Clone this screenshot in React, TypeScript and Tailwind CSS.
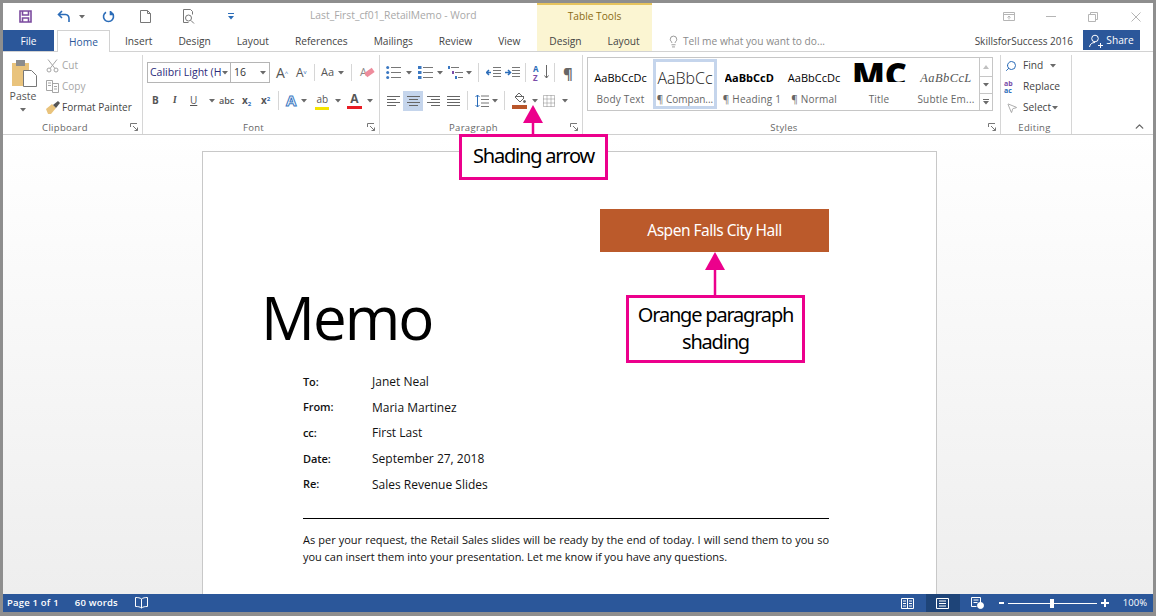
import React from "react";
import { ChevronUp, Lightbulb, Search, MousePointer2 } from "lucide-react";

const Caret = ({ className = "" }: { className?: string }) => (
  <svg width="6" height="4" viewBox="0 0 6 4" className={`shrink-0 ${className}`}>
    <path d="M0 0h6L3 3.5z" fill="#6a6a6a" />
  </svg>
);

const Launcher = () => (
  <svg width="8" height="8" viewBox="0 0 8 8" className="absolute right-[4px] bottom-[3px]" fill="none" stroke="#777">
    <path d="M.5 4V.5H7M7.5 7.5L3 3M7.5 4.5v3h-3" />
  </svg>
);

const Group = ({ label, width, children }: { label: string; width: string; children: React.ReactNode }) => (
  <div className={`relative flex flex-col shrink-0 h-[79px] border-r border-[#d6d6d6] ${width}`}>
    <div className="flex-1 min-h-0">{children}</div>
    <div className={`text-center text-[9.5px] leading-[12px] tracking-[0.3px] text-[#666] ${label === "Editing" ? "pr-[6px]" : "pr-[15px]"}`}>{label}</div>
    {label !== "Editing" && <Launcher />}
  </div>
);

const Lines = ({ kind }: { kind: "left" | "center" | "right" | "justify" }) => {
  const rows = {
    left: ["M0 .5h13", "M0 3.5h9", "M0 6.5h13", "M0 9.5h9"],
    center: ["M0 .5h13", "M2 3.5h9", "M0 6.5h13", "M2 9.5h9"],
    right: ["M0 .5h13", "M4 3.5h9", "M0 6.5h13", "M4 9.5h9"],
    justify: ["M0 .5h13", "M0 3.5h13", "M0 6.5h13", "M0 9.5h13"],
  }[kind];
  return (
    <svg width="13" height="10" viewBox="0 0 13 10" stroke="#666">
      {rows.map((d) => (
        <path key={d} d={d} />
      ))}
    </svg>
  );
};

const ListIcon = ({ kind }: { kind: "bullet" | "number" | "multi" }) => (
  <svg width="15" height="14" viewBox="0 0 15 14">
    {kind === "multi" ? (
      <g>
        <path d="M3 1.5h8M7 6.5h8M10 11.5h5" stroke="#777" />
        <rect x="0" y="0" width="2" height="3" fill="#3a78c2" />
        <rect x="4" y="5" width="2" height="3" fill="#7a4ca8" />
        <rect x="7" y="10" width="2" height="3" fill="#3a78c2" />
      </g>
    ) : (
      <g>
        <path d="M5 1.5h10M5 6.5h10M5 11.5h10" stroke="#777" />
        {[1.5, 6.5, 11.5].map((y) =>
          kind === "bullet" ? (
            <circle key={y} cx="1.7" cy={y} r="1.5" fill="#3a78c2" />
          ) : (
            <rect key={y} x="0" y={y - 1.5} width="3.5" height="3" fill="#3a78c2" />
          )
        )}
      </g>
    )}
  </svg>
);

const StyleItem = ({ sample, label, width, sampleClass }: { sample: React.ReactNode; label: string; width: string; sampleClass: string }) => (
  <div className={`flex flex-col items-center shrink-0 overflow-hidden h-full ${width}`}>
    <div className={`h-[35px] pt-[5px] w-full flex items-center justify-center overflow-hidden whitespace-nowrap ${sampleClass}`}>{sample}</div>
    <div className="text-[10px] leading-[12px] text-[#666] whitespace-nowrap tracking-[0.2px]">{label}</div>
  </div>
);

const Callout = ({ className, children }: { className: string; children: React.ReactNode }) => (
  <div className={`absolute z-10 bg-white border-[3px] border-[#ec008c] pb-[3px] flex items-center justify-center text-center text-black font-['Noto_Sans',sans-serif] text-[20px] leading-[27px] tracking-[-1.2px] ${className}`}>
    {children}
  </div>
);

const MemoRow = ({ label, value }: { label: string; value: string }) => (
  <div className="flex h-[25.7px] items-center text-[12px] text-[#111]">
    <span className="w-[69px] font-semibold text-[11px] tracking-[-0.1px]">{label}</span>
    <span>{value}</span>
  </div>
);

export default function App() {
  return (
    <div className="relative w-[1156px] h-[616px] overflow-hidden bg-white border-[3px] border-b-[4px] border-[#8e8e8e] flex flex-col font-['Open_Sans',sans-serif]">
      {/* title bar */}
      <div className="flex h-[27px] shrink-0">
        <div className="flex items-center w-[534px] shrink-0">
          <svg width="13" height="13" viewBox="0 0 13 13" className="ml-[16px]" fill="none" stroke="#7b4a9e" strokeWidth="1.6">
            <path d="M1 1h11v11H1zM3.5 1v4h6V1M3.5 12V8h6v4" />
          </svg>
          <svg width="14" height="13" viewBox="0 0 14 13" className="ml-[25px]" fill="none" stroke="#2b6cb8" strokeWidth="1.6">
            <path d="M5 1L1.5 4.5 5 8M2 4.5h6.5a4 4 0 0 1 3.5 4V12" />
          </svg>
          <Caret className="ml-[8px]" />
          <svg width="13" height="13" viewBox="0 0 13 13" className="ml-[17px]" fill="none" stroke="#2b6cb8" strokeWidth="1.6">
            <path d="M4 2.2a5 5 0 1 0 5 0M8.5 1v3.5H12" />
          </svg>
          <svg width="11" height="13" viewBox="0 0 11 13" className="ml-[25px]" fill="none" stroke="#777">
            <path d="M.5.5h7l3 3v9H.5zM7.5.5v3h3" />
          </svg>
          <svg width="14" height="15" viewBox="0 0 14 15" className="ml-[31px]" fill="none" stroke="#777">
            <path d="M1.5.5h7l2 2v3M1.5.5v13h5" />
            <circle cx="6.5" cy="9" r="3" />
            <path d="M9 11.5l3 3" />
          </svg>
          <svg width="6" height="7" viewBox="0 0 6 7" className="ml-[32px]">
            <path d="M0 .5h6" stroke="#2b6cb8" />
            <path d="M0 3h6L3 6.5z" fill="#2b6cb8" />
          </svg>
          <span className="ml-[76px] pb-[2px] text-[10.3px] text-[#a8a8a8] whitespace-nowrap">Last_First_cf01_RetailMemo - Word</span>
        </div>
        <div className="w-[115px] shrink-0 bg-[#fbf5d2] border-t-[2px] border-[#e6c35c] pb-[2px] flex items-center justify-center text-[10.2px] text-[#8a6a14]">
          Table Tools
        </div>
        <div className="flex-1 flex items-center">
          <svg width="12" height="9" viewBox="0 0 12 9" className="ml-[351px]" fill="none" stroke="#b5b5b5">
            <path d="M.5.5h11v8H.5zM.5 2.5h11M6 7.500V4M4.500 5.500L6 4l1.500 1.500" />
          </svg>
          <div className="ml-[31px] w-[10px] h-px bg-[#b5b5b5]" />
          <svg width="10" height="10" viewBox="0 0 10 10" className="ml-[32px]" fill="none" stroke="#b5b5b5">
            <path d="M.5 2.5h7v7h-7zM2.5 2.5v-2h7v7h-2" />
          </svg>
          <svg width="10" height="10" viewBox="0 0 10 10" className="ml-[33px]" stroke="#b5b5b5">
            <path d="M.5.5l9 9M9.5.5l-9 9" />
          </svg>
        </div>
      </div>

      {/* tabs */}
      <div className="flex h-[22px] shrink-0 border-b border-[#d2d2d2] text-[10.2px] text-[#444] items-stretch">
        <div className="w-[51px] pt-[2px] bg-[#2b579a] text-white flex items-center justify-center">File</div>
        <div className="ml-[3px] w-[53px] pt-[2px] -mb-px bg-white border border-b-0 border-[#d2d2d2] text-[#2b579a] flex items-center justify-center">Home</div>
        <div className="flex items-center pt-[2px] pl-[2px] w-[427px] shrink-0">
          {["Insert", "Design", "Layout", "References", "Mailings", "Review", "View"].map((t) => (
            <span key={t} className="px-[13px]">{t}</span>
          ))}
        </div>
        <div className="w-[115px] pt-[2px] shrink-0 bg-[#fbf5d2] flex items-center justify-center gap-[26px]">
          <span>Design</span>
          <span>Layout</span>
        </div>
        <div className="flex items-center pt-[2px] ml-[15px] text-[#8a8a8a]">
          <Lightbulb size={13} strokeWidth={1.2} color="#666" />
          <span className="ml-[3px] whitespace-nowrap">Tell me what you want to do...</span>
        </div>
        <span className="ml-auto self-center pt-[2px] text-[10px] text-[#444] whitespace-nowrap">SkillsforSuccess 2016</span>
        <div className="ml-[10px] mr-[13px] mb-px pt-[1px] w-[57px] bg-[#2b579a] text-white flex items-center justify-center gap-[3px]">
          <svg width="14" height="14" viewBox="0 0 14 14" fill="none" stroke="#fff">
            <circle cx="6" cy="4.5" r="3.3" />
            <path d="M.5 13c.5-3 2.500-4.500 5.500-4.500M9 11.500h5M11.500 9v5" />
          </svg>
          Share
        </div>
      </div>

      {/* ribbon */}
      <div className="flex h-[83px] shrink-0 pt-[3px] border-b border-[#cfcfcf] text-[10.2px] text-[#555] relative">
        <Group label="Clipboard" width="w-[140px]">
          <div className="flex">
            <div className="w-[40px] pl-[8px] pt-[5px] flex flex-col items-center">
              <svg width="26" height="28" viewBox="0 0 26 28" className="mr-[5px]">
                <rect x="0" y="3" width="17" height="23" fill="#e9c37c" />
                <rect x="4" y="0" width="9" height="6" fill="#8c8c8c" />
                <path d="M11.500 10.500h8l5 5v11h-13z" fill="#fff" stroke="#777" />
              </svg>
              <span className="text-[10.5px] leading-[14px] -ml-[8px] mt-[1px]">Paste</span>
              <Caret className="-ml-[8px] mt-[5px]" />
            </div>
            <div className="flex flex-col pl-[3px] text-[10px]">
              <div className="flex items-center h-[21px] gap-[3px] text-[#a5a5a5]">
                <svg width="13" height="14" viewBox="0 0 13 14" fill="none" stroke="#a5a5a5">
                  <path d="M2 .5l7 9M11 .5l-7 9" />
                  <circle cx="3" cy="11" r="2" />
                  <circle cx="10" cy="11" r="2" />
                </svg>
                Cut
              </div>
              <div className="flex items-center h-[21px] gap-[3px] text-[#a5a5a5]">
                <svg width="13" height="13" viewBox="0 0 13 13" fill="none" stroke="#a5a5a5">
                  <path d="M.5.5h6v10h-6zM6.500 3.500h6v9h-6zM2 3h3M2 5.500h3M8 6.500h3M8 9h3" />
                </svg>
                Copy
              </div>
              <div className="flex items-center h-[20px] gap-[2px] whitespace-nowrap text-[#444]">
                <svg width="14" height="13" viewBox="0 0 14 13">
                  <path d="M0 8l6-5 4 4-5 6H2z" fill="#e9c37c" />
                  <path d="M7 4l5-4 2 2-4 5z" fill="#555" />
                </svg>
                Format Painter
              </div>
            </div>
          </div>
        </Group>

        <Group label="Font" width="w-[237px]">
          <div className="pl-[4px] pt-[7px]">
            <div className="flex items-center h-[21px]">
              <div className="flex items-center w-[84px] h-[21px] border border-[#b5b5b5] pl-[2px] text-[10.5px] text-[#2a2a7a] whitespace-nowrap overflow-hidden">
                <span className="w-[72px] overflow-hidden">Calibri Light (H</span>
                <Caret />
              </div>
              <div className="flex items-center w-[39px] h-[21px] border border-l-0 border-[#b5b5b5] pl-[3px] text-[10.5px] text-[#333]">
                <span className="flex-1">16</span>
                <Caret className="mr-[3px]" />
              </div>
              <span className="ml-[6px] text-[14px] text-[#555] w-[20px] leading-[16px]">A<sup className="text-[6px] text-[#2b6cb8]">^</sup></span>
              <span className="text-[12px] text-[#555] w-[17px] leading-[16px]">A<sup className="text-[6px] text-[#2b6cb8]">v</sup></span>
              <div className="h-[17px] w-px bg-[#d6d6d6] ml-[1px]" />
              <span className="ml-[6px] text-[11px] text-[#555]">Aa</span>
              <Caret className="ml-[4px]" />
              <div className="h-[17px] w-px bg-[#d6d6d6] ml-[7px]" />
              <span className="ml-[8px] text-[11px] text-[#888] relative">
                A
                <span className="absolute left-[5px] top-[6px] w-[9px] h-[5px] bg-[#ee8c9c] rotate-[-35deg]" />
              </span>
            </div>
            <div className="flex items-center h-[21px] mt-[7px] text-[10px] text-[#555] font-bold">
              <span className="w-[21px] pl-[5px]">B</span>
              <span className="w-[21px] pl-[5px] italic font-serif">I</span>
              <span className="w-[15px] pl-[1px] underline font-normal">U</span>
              <Caret className="ml-[5px]" />
              <span className="ml-[4px] w-[22px] font-semibold text-[9px]">abc</span>
              <span className="w-[20px] pl-[1px]">x<sub className="text-[6px] text-[#2b6cb8]">2</sub></span>
              <span className="w-[17px]">x<sup className="text-[6px] text-[#2b6cb8]">2</sup></span>
              <div className="h-[19px] w-px bg-[#d6d6d6]" />
              <span className="ml-[7px] text-[15px] font-bold text-white [-webkit-text-stroke:1px_#3a78c2]">A</span>
              <Caret className="ml-[5px]" />
              <span className="ml-[8px] relative text-[10px] font-normal pb-[3px] w-[14px] text-center">
                ab
                <span className="absolute left-0 right-0 bottom-0 h-[3px] bg-[#f5e400]" />
              </span>
              <Caret className="ml-[6px]" />
              <span className="ml-[6px] relative text-[12px] pb-[3px] px-[3px] leading-[14px]">
                A
                <span className="absolute left-0 right-0 bottom-0 h-[3px] bg-[#e81c24]" />
              </span>
              <Caret className="ml-[5px]" />
            </div>
          </div>
        </Group>

        <Group label="Paragraph" width="w-[203px]">
          <div className="pl-[6px] pt-[7px]">
            <div className="flex items-center h-[21px]">
              <ListIcon kind="bullet" />
              <Caret className="ml-[5px]" />
              <span className="ml-[6px]"><ListIcon kind="number" /></span>
              <Caret className="ml-[4px]" />
              <span className="ml-[5px]"><ListIcon kind="multi" /></span>
              <Caret className="ml-[3px]" />
              <div className="h-[19px] w-px bg-[#d6d6d6] ml-[6px]" />
              <svg width="15" height="11" viewBox="0 0 15 11" className="ml-[7px]" stroke="#777">
                <path d="M7 .5h8M7 3.500h8M7 6.500h8M7 9.500h8" />
                <path d="M5 5.500H1M3 3L.5 5.500 3 8" stroke="#2b6cb8" strokeWidth="1.500" fill="none" />
              </svg>
              <svg width="15" height="11" viewBox="0 0 15 11" className="ml-[4px]" stroke="#777">
                <path d="M7 .5h8M7 3.500h8M7 6.500h8M7 9.500h8" />
                <path d="M0 5.500h5M3 3l2.500 2.500L3 8" stroke="#2b6cb8" strokeWidth="1.500" fill="none" />
              </svg>
              <div className="h-[19px] w-px bg-[#d6d6d6] ml-[5px]" />
              <div className="ml-[7px] relative w-[14px] h-[18px] text-[8px] leading-[9px] font-bold">
                <span className="text-[#2b6cb8] block h-[9px]">A</span>
                <span className="text-[#7a4ca8] block h-[9px]">Z</span>
                <svg width="5" height="14" viewBox="0 0 5 14" className="absolute right-[-2px] top-[1px]" fill="none" stroke="#666">
                  <path d="M2.500 0v13M.5 10.500l2 2.500 2-2.500" />
                </svg>
              </div>
              <div className="h-[19px] w-px bg-[#d6d6d6] ml-[7px]" />
              <span className="ml-[8px] text-[15px] leading-[18px] text-[#666] font-bold">¶</span>
            </div>
            <div className="flex items-center h-[21px] mt-[7px]">
              <span className="ml-[1px] w-[13px]"><Lines kind="left" /></span>
              <span className="ml-[3px] w-[20px] h-[20px] bg-[#c5d5ec] flex items-center justify-center"><Lines kind="center" /></span>
              <span className="ml-[4px] w-[13px]"><Lines kind="right" /></span>
              <span className="ml-[7px] w-[13px]"><Lines kind="justify" /></span>
              <div className="h-[19px] w-px bg-[#d6d6d6] ml-[7px]" />
              <svg width="14" height="14" viewBox="0 0 14 14" className="ml-[7px]" fill="none">
                <path d="M6 2h8M6 5.500h8M6 9h8M6 12.500h8" stroke="#777" />
                <path d="M2.500 1v12M.5 3l2-2 2 2M.5 11l2 2 2-2" stroke="#2b6cb8" />
              </svg>
              <Caret className="ml-[3px]" />
              <div className="h-[19px] w-px bg-[#d6d6d6] ml-[6px]" />
              <span className="ml-[7px] relative w-[15px] h-[17px] flex justify-center">
                <svg width="13" height="12" viewBox="0 0 13 12" fill="none" stroke="#666">
                  <path d="M6 1l5 5-4 4-5-5zM3 4.500h8" />
                  <circle cx="11.500" cy="9.500" r="1" fill="#666" />
                </svg>
                <span className="absolute left-0 right-0 bottom-0 h-[4px] bg-[#b9562a]" />
              </span>
              <Caret className="ml-[5px]" />
              <svg width="12" height="12" viewBox="0 0 12 12" className="ml-[5px]" fill="none" stroke="#888" strokeDasharray="1 1">
                <path d="M.5.500h11v11H.5zM4 .5v11M8 .5v11M.5 4h11M.5 8h11" />
              </svg>
              <Caret className="ml-[7px]" />
            </div>
          </div>
        </Group>

        <Group label="Styles" width="w-[418px]">
          <div className="pl-[4px] pt-[2px]">
            <div className="flex w-[406px] h-[54px] border border-[#c6c6c6]">
              <StyleItem width="w-[65px]" sampleClass="text-[11px] text-black" sample="AaBbCcDc" label="Body Text" />
              <div className="w-[64px] h-[50px] my-[1px] shrink-0 border-[3px] border-[#c5d5ec] overflow-hidden flex flex-col items-center">
                <div className="h-[31px] flex items-center text-[16px] font-light text-[#222] whitespace-nowrap">AaBbCc</div>
                <div className="text-[10px] leading-[12px] text-[#666] whitespace-nowrap">¶ Compan...</div>
              </div>
              <StyleItem width="w-[70px]" sampleClass="text-[11px] font-bold text-black" sample={<span className="block w-[55px] overflow-hidden">AaBbCcD</span>} label="¶ Heading 1" />
              <StyleItem width="w-[54px]" sampleClass="text-[11px] text-black" sample="AaBbCcDc" label="¶ Normal" />
              <div className="w-[76px] shrink-0 h-full flex flex-col items-center">
                <div className="mt-[4px] h-[20px] w-[54px] overflow-hidden text-[34px] leading-[24px] font-extrabold text-black whitespace-nowrap text-center">MC</div>
                <div className="mt-[11px] text-[10px] leading-[12px] text-[#666] tracking-[0.2px]">Title</div>
              </div>
              <StyleItem width="w-[58px]" sampleClass="text-[12.5px] italic font-['Liberation_Serif',serif] text-[#555] tracking-[0.4px]" sample="AaBbCcL" label="Subtle Em..." />
              <div className="ml-auto w-[13px] flex flex-col border-l border-[#c6c6c6]">
                <div className="h-[19px] flex items-center justify-center border-b border-[#c6c6c6]">
                  <svg width="6" height="4" viewBox="0 0 6 4"><path d="M3 0l3 4H0z" fill="#c0c0c0" /></svg>
                </div>
                <div className="h-[17px] flex items-center justify-center border-b border-[#c6c6c6]"><Caret /></div>
                <div className="flex-1 flex flex-col items-center justify-center gap-[1px]">
                  <div className="w-[6px] h-px bg-[#6a6a6a]" />
                  <Caret />
                </div>
              </div>
            </div>
          </div>
        </Group>

        <Group label="Editing" width="w-[71px] pl-[3px]">
          <div className="flex flex-col text-[10.2px] text-[#444]">
            <div className="flex items-center h-[21px]">
              <Search size={12} color="#2b6cb8" className="-scale-x-100 ml-[1px]" />
              <span className="ml-[6px]">Find</span>
              <Caret className="ml-[7px]" />
            </div>
            <div className="flex items-center h-[21px]">
              <span className="w-[14px] text-[7px] leading-[7px] font-bold text-[#7a4ca8]">ab<br /><span className="text-[#2b6cb8]">ac</span></span>
              <span className="ml-[5px]">Replace</span>
            </div>
            <div className="flex items-center h-[21px]">
              <MousePointer2 size={12} strokeWidth={1.2} color="#777" className="ml-[2px]" />
              <span className="ml-[5px]">Select</span>
              <Caret className="ml-[1px]" />
            </div>
          </div>
        </Group>

        <ChevronUp size={13} strokeWidth={2.5} color="#666" className="absolute right-[7px] bottom-[1px]" />
      </div>

      {/* document area */}
      <div className="flex-1 min-h-0 overflow-hidden bg-gradient-to-b from-white to-[#eeeeee] pt-[16px] pl-[199px]">
        <div className="w-[735px] h-[600px] bg-white border border-[#c8c8c8] pt-[57px] pl-[58px] flex flex-col">
          <div className="self-end mr-[107px] w-[229px] h-[43px] pt-[1px] bg-[#bb5a2b] text-white text-[15.5px] flex items-center justify-center tracking-[-0.5px] font-['Noto_Sans',sans-serif]">
            Aspen Falls City Hall
          </div>
          <div className="mt-[16px] h-[99px] text-[60px] leading-[99px] text-black tracking-[-2px]">Memo</div>
          <div className="ml-[42px] w-[526px] mt-[2px]">
            <MemoRow label="To:" value="Janet Neal" />
            <MemoRow label="From:" value="Maria Martinez" />
            <MemoRow label="cc:" value="First Last" />
            <MemoRow label="Date:" value="September 27, 2018" />
            <MemoRow label="Re:" value="Sales Revenue Slides" />
            <div className="mt-[21px] border-t border-black" />
            <p className="mt-[12px] text-[11px] leading-[17px] text-[#111] text-justify tracking-[-0.03px]">
              As per your request, the Retail Sales slides will be ready by the end of today. I will send them to you so
              you can insert them into your presentation. Let me know if you have any questions.
            </p>
          </div>
        </div>
      </div>

      {/* status bar */}
      <div className="flex items-center h-[18px] shrink-0 bg-[#2b579a] text-white text-[9.5px] font-semibold tracking-[0.2px]">
        <span className="ml-[4px]">Page 1 of 1</span>
        <span className="ml-[16px]">60 words</span>
        <svg width="13" height="12" viewBox="0 0 13 12" className="ml-[17px]" fill="none" stroke="#fff">
          <path d="M6.500 2C5 .8 3 .5.500.5v9c2.500 0 4.500.3 6 1.500 1.500-1.200 3.500-1.500 6-1.500v-9c-2.500 0-4.500.3-6 1.500zM6.500 2v9" />
        </svg>
        <div className="ml-auto flex items-center h-full">
          <svg width="13" height="11" viewBox="0 0 13 11" fill="none" stroke="#fff">
            <path d="M.5.5h12v10H.5zM6.500.5v10M2 3h3M2 5.500h3M2 8h3M8 3h3M8 5.500h3M8 8h3" />
          </svg>
          <div className="ml-[12px] w-[34px] h-full bg-[#1e4478] flex items-center justify-center">
            <svg width="13" height="11" viewBox="0 0 13 11" fill="none" stroke="#fff">
              <path d="M.5.500h12v10H.5zM3 3h7M3 5.500h7M3 8h7" />
            </svg>
          </div>
          <svg width="13" height="12" viewBox="0 0 13 12" className="ml-[11px]" fill="none" stroke="#fff">
            <path d="M.5.500h9v8M.5.500v9h5M2.500 3h5M2.500 5.500h4" />
            <circle cx="9.500" cy="8.500" r="3" fill="#fff" />
          </svg>
          <div className="ml-[15px] w-[5px] h-[2px] bg-white" />
          <div className="ml-[4px] w-[89px] h-px bg-white relative">
            <div className="absolute left-[42px] top-[-4px] w-[4px] h-[9px] bg-white" />
          </div>
          <div className="ml-[4px] w-[8px] h-[8px] relative">
            <div className="absolute left-0 top-[3px] w-[8px] h-[2px] bg-white" />
            <div className="absolute left-[3px] top-0 w-[2px] h-[8px] bg-white" />
          </div>
          <span className="ml-[14px] mr-[6px] font-normal tracking-normal">100%</span>
        </div>
      </div>

      {/* callouts */}
      <svg width="20" height="32" viewBox="0 0 20 32" className="absolute left-[520px] top-[102px] z-10">
        <path d="M10 0l10 18H0z" fill="#ec008c" />
        <path d="M10 16v16" stroke="#ec008c" strokeWidth="2.500" />
      </svg>
      <Callout className="left-[456px] top-[131px] w-[149px] h-[46px]">Shading arrow</Callout>
      <svg width="20" height="44" viewBox="0 0 20 44" className="absolute left-[702px] top-[249px] z-10">
        <path d="M10 0l10 18H0z" fill="#ec008c" />
        <path d="M10 16v28" stroke="#ec008c" strokeWidth="2.500" />
      </svg>
      <Callout className="left-[623px] top-[292px] w-[179px] h-[68px]">
        Orange paragraph
        <br />
        shading
      </Callout>
    </div>
  );
}
